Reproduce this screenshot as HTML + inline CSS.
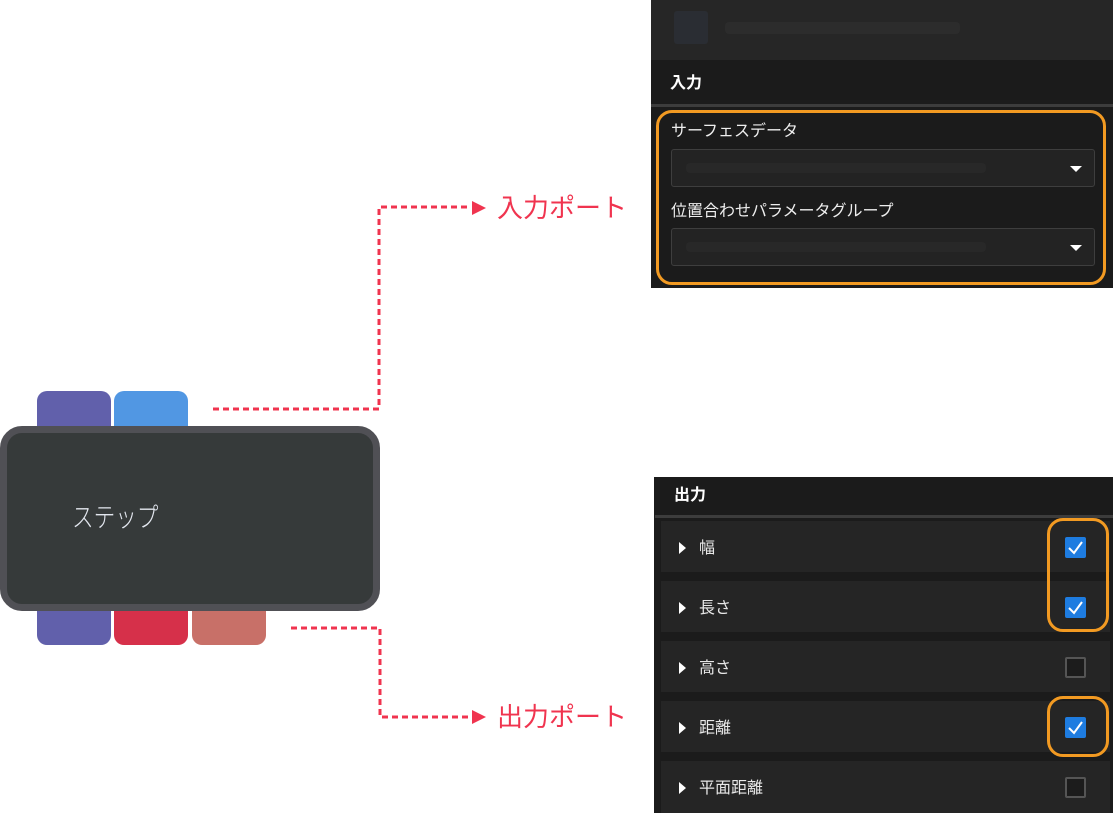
<!DOCTYPE html>
<html><head><meta charset="utf-8"><style>
*{margin:0;padding:0;box-sizing:border-box}
body{width:1113px;height:813px;background:#fff;position:relative;overflow:hidden;font-family:"Liberation Sans","Noto Sans CJK JP",sans-serif}
.a{position:absolute}
.tab{position:absolute;width:74px;border-radius:10px}
.lbl{position:absolute;color:#f0344f;font-size:26px;line-height:30px}
.row{position:absolute;left:661px;width:449px;height:51px;background:#252525;color:#e8e8e8;font-size:16px}
.row .t{position:absolute;left:18px;top:21px;width:0;height:0;border-left:7px solid #fff;border-top:6px solid transparent;border-bottom:6px solid transparent}
.row .n{position:absolute;left:38px;top:17px;line-height:22px}
.cb{position:absolute;left:404px;top:16px;width:21px;height:21px;border:2px solid #555;background:#1c1c1c;border-radius:2px}
.cb.on{background:#1e7ce0;border-color:#1e7ce0}
.ob{position:absolute;border:3px solid #f29a22;border-radius:16px}
</style></head><body>
<div class="tab" style="left:37px;top:391px;height:60px;background:#6160ab"></div>
<div class="tab" style="left:114px;top:391px;height:60px;background:#5197e3"></div>
<div class="tab" style="left:37px;top:585px;height:60px;background:#6160ab"></div>
<div class="tab" style="left:114px;top:585px;height:60px;background:#d6304a"></div>
<div class="tab" style="left:192px;top:585px;height:60px;background:#c87068"></div>
<div class="a" style="left:0;top:426px;width:380px;height:185px;background:#363a3a;border:7px solid #505055;border-radius:22px"></div>
<div class="a" style="left:72px;top:500px;color:#e2e6ee;font-size:27px;line-height:36px;font-weight:300;transform:scaleX(0.8);transform-origin:left center;white-space:nowrap">ステップ</div>
<svg class="a" style="left:0;top:0" width="650" height="813">
<g stroke="#f0344f" stroke-width="3" fill="none" stroke-dasharray="6 4">
<path d="M213 409 H379 V207 H470"/>
<path d="M291 628 H380 V717 H470"/>
</g>
<path d="M472 201 L486 208 L472 215Z" fill="#f0344f"/>
<path d="M472 710 L486 717 L472 724Z" fill="#f0344f"/>
</svg>
<div class="lbl" style="left:497px;top:193px">入力ポート</div>
<div class="lbl" style="left:497px;top:702px">出力ポート</div>
<div class="a" style="left:651px;top:0;width:462px;height:288px;background:#1b1b1b"></div>
<div class="a" style="left:651px;top:0;width:462px;height:60px;background:#262626"></div>
<div class="a" style="left:674px;top:11px;width:34px;height:33px;background:#2a2d33;border-radius:3px"></div>
<div class="a" style="left:725px;top:22px;width:235px;height:12px;background:#2c2c2c;border-radius:4px"></div>
<div class="a" style="left:670px;top:73px;color:#fff;font-size:16px;font-weight:bold;line-height:22px">入力</div>
<div class="a" style="left:651px;top:104px;width:462px;height:3px;background:#3c3c3c"></div>
<div class="a" style="left:671px;top:121px;color:#eee;font-size:16px;line-height:22px">サーフェスデータ</div>
<div class="a" style="left:671px;top:149px;width:424px;height:38px;background:#232323;border:1px solid #3e3e3e;border-radius:3px"></div>
<div class="a" style="left:686px;top:163px;width:300px;height:10px;background:#282828;border-radius:4px"></div>
<div class="a" style="left:1070px;top:166px;border-top:6px solid #fff;border-left:6px solid transparent;border-right:6px solid transparent"></div>
<div class="a" style="left:671px;top:201px;color:#eee;font-size:16px;line-height:22px">位置合わせパラメータグループ</div>
<div class="a" style="left:671px;top:228px;width:424px;height:38px;background:#232323;border:1px solid #3e3e3e;border-radius:3px"></div>
<div class="a" style="left:686px;top:242px;width:300px;height:10px;background:#282828;border-radius:4px"></div>
<div class="a" style="left:1070px;top:245px;border-top:6px solid #fff;border-left:6px solid transparent;border-right:6px solid transparent"></div>
<div class="ob" style="left:656px;top:110px;width:450px;height:175px"></div>
<div class="a" style="left:654px;top:477px;width:459px;height:336px;background:#1b1b1b"></div>
<div class="a" style="left:674px;top:485px;color:#fff;font-size:16px;font-weight:bold;line-height:22px">出力</div>
<div class="a" style="left:655px;top:515px;width:458px;height:3px;background:#3c3c3c"></div>
<div class="row" style="top:521px"><div class="t"></div><div class="n">幅</div><div class="cb on"></div></div>
<div class="row" style="top:581px"><div class="t"></div><div class="n">長さ</div><div class="cb on"></div></div>
<div class="row" style="top:641px"><div class="t"></div><div class="n">高さ</div><div class="cb"></div></div>
<div class="row" style="top:701px"><div class="t"></div><div class="n">距離</div><div class="cb on"></div></div>
<div class="row" style="top:761px;height:52px"><div class="t"></div><div class="n">平面距離</div><div class="cb"></div></div>
<svg class="a" style="left:0;top:0" width="1113" height="813">
<g stroke="#fff" stroke-width="2" fill="none">
<path d="M1069 548 L1074 553 L1082 542"/>
<path d="M1069 608 L1074 613 L1082 602"/>
<path d="M1069 728 L1074 733 L1082 722"/>
</g></svg>
<div class="ob" style="left:1047px;top:518px;width:62px;height:114px"></div>
<div class="ob" style="left:1047px;top:696px;width:62px;height:61px"></div>
</body></html>
